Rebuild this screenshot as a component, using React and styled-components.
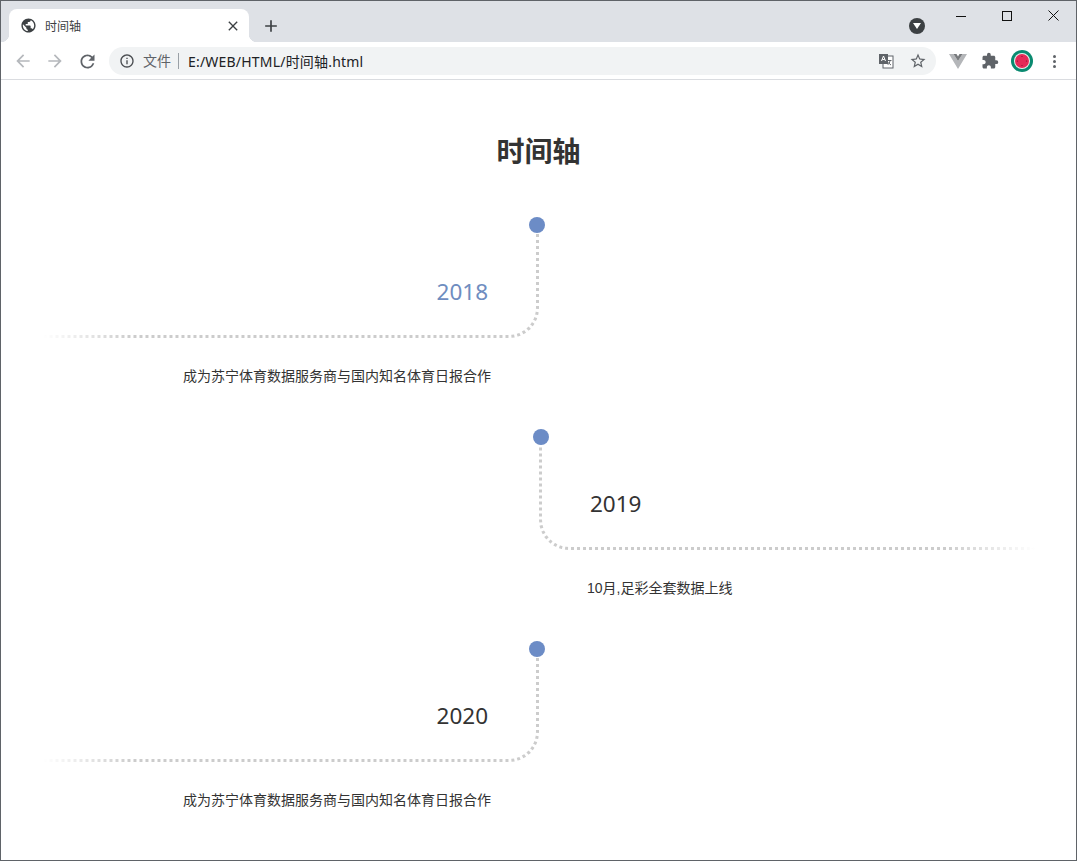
import React from 'react';
import styled, { createGlobalStyle } from 'styled-components';
import { MdArrowBack, MdArrowForward, MdRefresh, MdInfoOutline, MdStarBorder, MdPublic, MdExtension, MdClose, MdAdd } from 'react-icons/md';

const GlobalStyle = createGlobalStyle`
  html, body {
    margin: 0;
    padding: 0;
    background: #fff;
  }
  body {
    font-family: "Noto Sans", "Noto Sans CJK SC", sans-serif;
    color: #333;
  }
`;

const Frame = styled.div`
  box-sizing: border-box;
  height: 861px;
  border: 1px solid #5f6368;
  overflow: hidden;
  display: flex;
  flex-direction: column;
`;

const TabStrip = styled.div`
  display: flex;
  flex-shrink: 0;
  align-items: flex-end;
  height: 41px;
  padding-left: 8px;
  background: #dee1e6;
`;

const Tab = styled.div`
  position: relative;
  display: flex;
  flex-shrink: 0;
  align-items: center;
  box-sizing: border-box;
  width: 240px;
  height: 33px;
  padding: 0 8px 0 11px;
  background: #fff;
  border-radius: 8px 8px 0 0;
  color: #3c4043;

  &::before,
  &::after {
    content: '';
    position: absolute;
    bottom: 0;
    width: 8px;
    height: 8px;
  }
  &::before {
    left: -8px;
    background: radial-gradient(circle at 0 0, transparent 8px, #fff 8.5px);
  }
  &::after {
    right: -8px;
    background: radial-gradient(circle at 100% 0, transparent 8px, #fff 8.5px);
  }
`;

const TabTitle = styled.span`
  flex: 1;
  margin-left: 8px;
  font-size: 12px;
`;

const NewTab = styled.div`
  display: flex;
  flex-shrink: 0;
  align-items: center;
  height: 33px;
  margin-left: 12px;
  color: #3c4043;
`;

const ProfileMenu = styled.div`
  display: flex;
  flex-shrink: 0;
  align-items: center;
  justify-content: center;
  width: 16px;
  height: 16px;
  margin: 0 0 8px 628px;
  border-radius: 50%;
  background: #3c4043;
`;

const WindowControls = styled.div`
  display: flex;
  flex-shrink: 0;
  align-self: flex-start;
  margin-left: 13px;
`;

const WindowButton = styled.div`
  display: flex;
  align-items: center;
  justify-content: center;
  width: 46px;
  height: 29px;
  color: #111;
`;

const Toolbar = styled.div`
  display: flex;
  flex-shrink: 0;
  align-items: center;
  box-sizing: border-box;
  height: 38px;
  padding: 1px 0 0 10px;
  background: #fff;
  border-bottom: 1px solid #dadce0;
`;

const NavButton = styled.div`
  display: flex;
  align-items: center;
  justify-content: center;
  width: 24px;
  height: 24px;
  margin-right: 8px;
  color: ${({ $disabled }) => ($disabled ? '#b5b8bc' : '#5f6368')};
`;

const Omnibox = styled.div`
  display: flex;
  flex-shrink: 0;
  align-items: center;
  box-sizing: border-box;
  width: 827px;
  height: 28px;
  margin-left: 2px;
  padding: 0 8px 0 10px;
  border-radius: 14px;
  background: #f1f3f4;
`;

const SecurityLabel = styled.span`
  margin-left: 8px;
  padding-right: 7px;
  border-right: 1px solid #9aa0a6;
  font-size: 14px;
  line-height: 16px;
  color: #5f6368;
`;

const Url = styled.span`
  flex: 1;
  margin-left: 9px;
  font-family: "Noto Sans", "Noto Sans CJK SC", sans-serif;
  font-size: 14px;
  letter-spacing: 0.2px;
  color: #202124;
`;

const OmniIcon = styled.div`
  display: flex;
  align-items: center;
  justify-content: center;
  width: 20px;
  height: 20px;
  margin-left: ${({ $gap }) => $gap || 0}px;
  color: #5f6368;
`;

const Extensions = styled.div`
  display: flex;
  flex-shrink: 0;
  align-items: center;
  margin-left: 6px;
`;

const ExtensionSlot = styled.div`
  display: flex;
  align-items: center;
  justify-content: center;
  width: 32px;
  height: 32px;
  color: #5f6368;
`;

const MenuDots = styled.div`
  display: flex;
  flex-direction: column;
  gap: 2px;
  i {
    display: block;
    width: 3px;
    height: 3px;
    border-radius: 50%;
    background: #5f6368;
  }
`;

const Page = styled.main`
  flex: 1;
  padding-top: 54px;
`;

const PageTitle = styled.h1`
  margin: 0 0 59px;
  font-family: "Noto Sans CJK SC", sans-serif;
  font-size: 28px;
  font-weight: 700;
  line-height: 32px;
  text-align: center;
  color: #333;
`;

const Timeline = styled.div`
  display: flex;
  flex-direction: column;
  width: 992px;
  margin-left: 42px;
`;

const Item = styled.section`
  width: 496px;
  height: 212px;
  align-self: ${({ $side }) => ($side === 'left' ? 'flex-start' : 'flex-end')};
`;

const Track = styled.div`
  position: relative;
  display: flex;
  align-items: flex-end;
  justify-content: ${({ $side }) => ($side === 'left' ? 'flex-end' : 'flex-start')};
  box-sizing: border-box;
  height: 113px;
  padding: 0 48px 30px;
  border-bottom: 3px dotted #ccc;
  ${({ $side }) =>
    $side === 'left'
      ? 'border-right: 3px dotted #ccc; border-bottom-right-radius: 30px;'
      : 'border-left: 3px dotted #ccc; border-bottom-left-radius: 30px;'}

  &::after {
    content: '';
    position: absolute;
    bottom: -3px;
    ${({ $side }) => ($side === 'left' ? 'left: 0' : 'right: 0')};
    width: 90px;
    height: 3px;
    background: linear-gradient(
      ${({ $side }) => ($side === 'left' ? 'to right' : 'to left')},
      #fff,
      rgba(255, 255, 255, 0)
    );
  }
`;

const Dot = styled.span`
  position: absolute;
  top: -8px;
  ${({ $side }) => ($side === 'left' ? 'right: -9px' : 'left: -9px')};
  width: 16px;
  height: 16px;
  border-radius: 50%;
  background: #6c8cc6;
`;

const Year = styled.div`
  font-size: 22.5px;
  line-height: 26px;
  color: ${({ $active }) => ($active ? '#6f8dc0' : '#333')};
`;

const Caption = styled.p`
  margin: 28px 0 0;
  padding: 0 48px;
  font-family: "Liberation Sans", "Noto Sans CJK SC", sans-serif;
  font-size: 14px;
  line-height: 20px;
  text-align: ${({ $side }) => ($side === 'left' ? 'right' : 'left')};
  color: #333;
`;

const TranslateIcon = () => (
  <svg width="16" height="16" viewBox="0 0 16 16">
    <rect x="5" y="3" width="10" height="12" fill="#fff" stroke="#5f6368" />
    <rect x="1" y="1" width="9" height="10" fill="#5f6368" />
    <path d="M3.500 8l2-5 2 5M4.300 6.500h2.400" fill="none" stroke="#fff" strokeWidth="1" />
    <path d="M10 7.500h3.500M12 7.500c-.3 2-1 3.300-2.200 4.300M10.500 9.500c.6 1 1.300 1.800 2.500 2.500" fill="none" stroke="#5f6368" />
  </svg>
);

const VueIcon = () => (
  <svg width="18" height="16" viewBox="0 0 18 16">
    <path d="M0 1h4.500L9 8l4.500-7H18L9 16z" fill="#b4b6b9" />
    <path d="M4.500 1h3L9 3.500 10.500 1h3L9 8z" fill="#77797c" />
  </svg>
);

const WatermelonAvatar = () => (
  <svg width="22" height="22" viewBox="0 0 22 22">
    <circle cx="11" cy="11" r="11" fill="#0a8a70" />
    <circle cx="11" cy="11" r="8" fill="#e8f3ef" />
    <circle cx="11" cy="11" r="7" fill="#e62a58" />
    <g fill="#7a1230">
      <circle cx="11" cy="6.500" r=".6" />
      <circle cx="15.500" cy="11" r=".6" />
      <circle cx="11" cy="15.500" r=".6" />
      <circle cx="6.500" cy="11" r=".6" />
    </g>
  </svg>
);

const items = [
  { year: '2018', side: 'left', active: true, text: '成为苏宁体育数据服务商与国内知名体育日报合作' },
  { year: '2019', side: 'right', text: '10月,足彩全套数据上线' },
  { year: '2020', side: 'left', text: '成为苏宁体育数据服务商与国内知名体育日报合作' }
];

const App = () => (
  <Frame>
    <GlobalStyle />
    <TabStrip>
      <Tab>
        <MdPublic size={17} />
        <TabTitle>时间轴</TabTitle>
        <MdClose size={16} />
      </Tab>
      <NewTab>
        <MdAdd size={20} />
      </NewTab>
      <ProfileMenu>
        <svg width="8" height="6" viewBox="0 0 8 6">
          <path d="M0 0h8L4 6z" fill="#fff" />
        </svg>
      </ProfileMenu>
      <WindowControls>
        <WindowButton>
          <svg width="10" height="10" viewBox="0 0 10 10">
            <path d="M0 5.500h10" stroke="currentColor" />
          </svg>
        </WindowButton>
        <WindowButton>
          <svg width="10" height="10" viewBox="0 0 10 10">
            <rect x=".5" y=".5" width="9" height="9" fill="none" stroke="currentColor" />
          </svg>
        </WindowButton>
        <WindowButton>
          <svg width="11" height="11" viewBox="0 0 11 11">
            <path d="M.5.500l10 10M10.500.500l-10 10" stroke="currentColor" />
          </svg>
        </WindowButton>
      </WindowControls>
    </TabStrip>
    <Toolbar>
      <NavButton $disabled><MdArrowBack size={20} /></NavButton>
      <NavButton $disabled><MdArrowForward size={20} /></NavButton>
      <NavButton><MdRefresh size={21} /></NavButton>
      <Omnibox>
        <MdInfoOutline size={16} color="#4a4d51" />
        <SecurityLabel>文件</SecurityLabel>
        <Url>E:/WEB/HTML/时间轴.html</Url>
        <OmniIcon><TranslateIcon /></OmniIcon>
        <OmniIcon $gap={12}><MdStarBorder size={18} /></OmniIcon>
      </Omnibox>
      <Extensions>
        <ExtensionSlot><VueIcon /></ExtensionSlot>
        <ExtensionSlot><MdExtension size={18} /></ExtensionSlot>
        <ExtensionSlot><WatermelonAvatar /></ExtensionSlot>
        <ExtensionSlot>
          <MenuDots><i /><i /><i /></MenuDots>
        </ExtensionSlot>
      </Extensions>
    </Toolbar>
    <Page>
      <PageTitle>时间轴</PageTitle>
      <Timeline>
        {items.map((item) => (
          <Item key={item.year} $side={item.side}>
            <Track $side={item.side}>
              <Dot $side={item.side} />
              <Year $active={item.active}>{item.year}</Year>
            </Track>
            <Caption $side={item.side}>{item.text}</Caption>
          </Item>
        ))}
      </Timeline>
    </Page>
  </Frame>
);

export default App;
